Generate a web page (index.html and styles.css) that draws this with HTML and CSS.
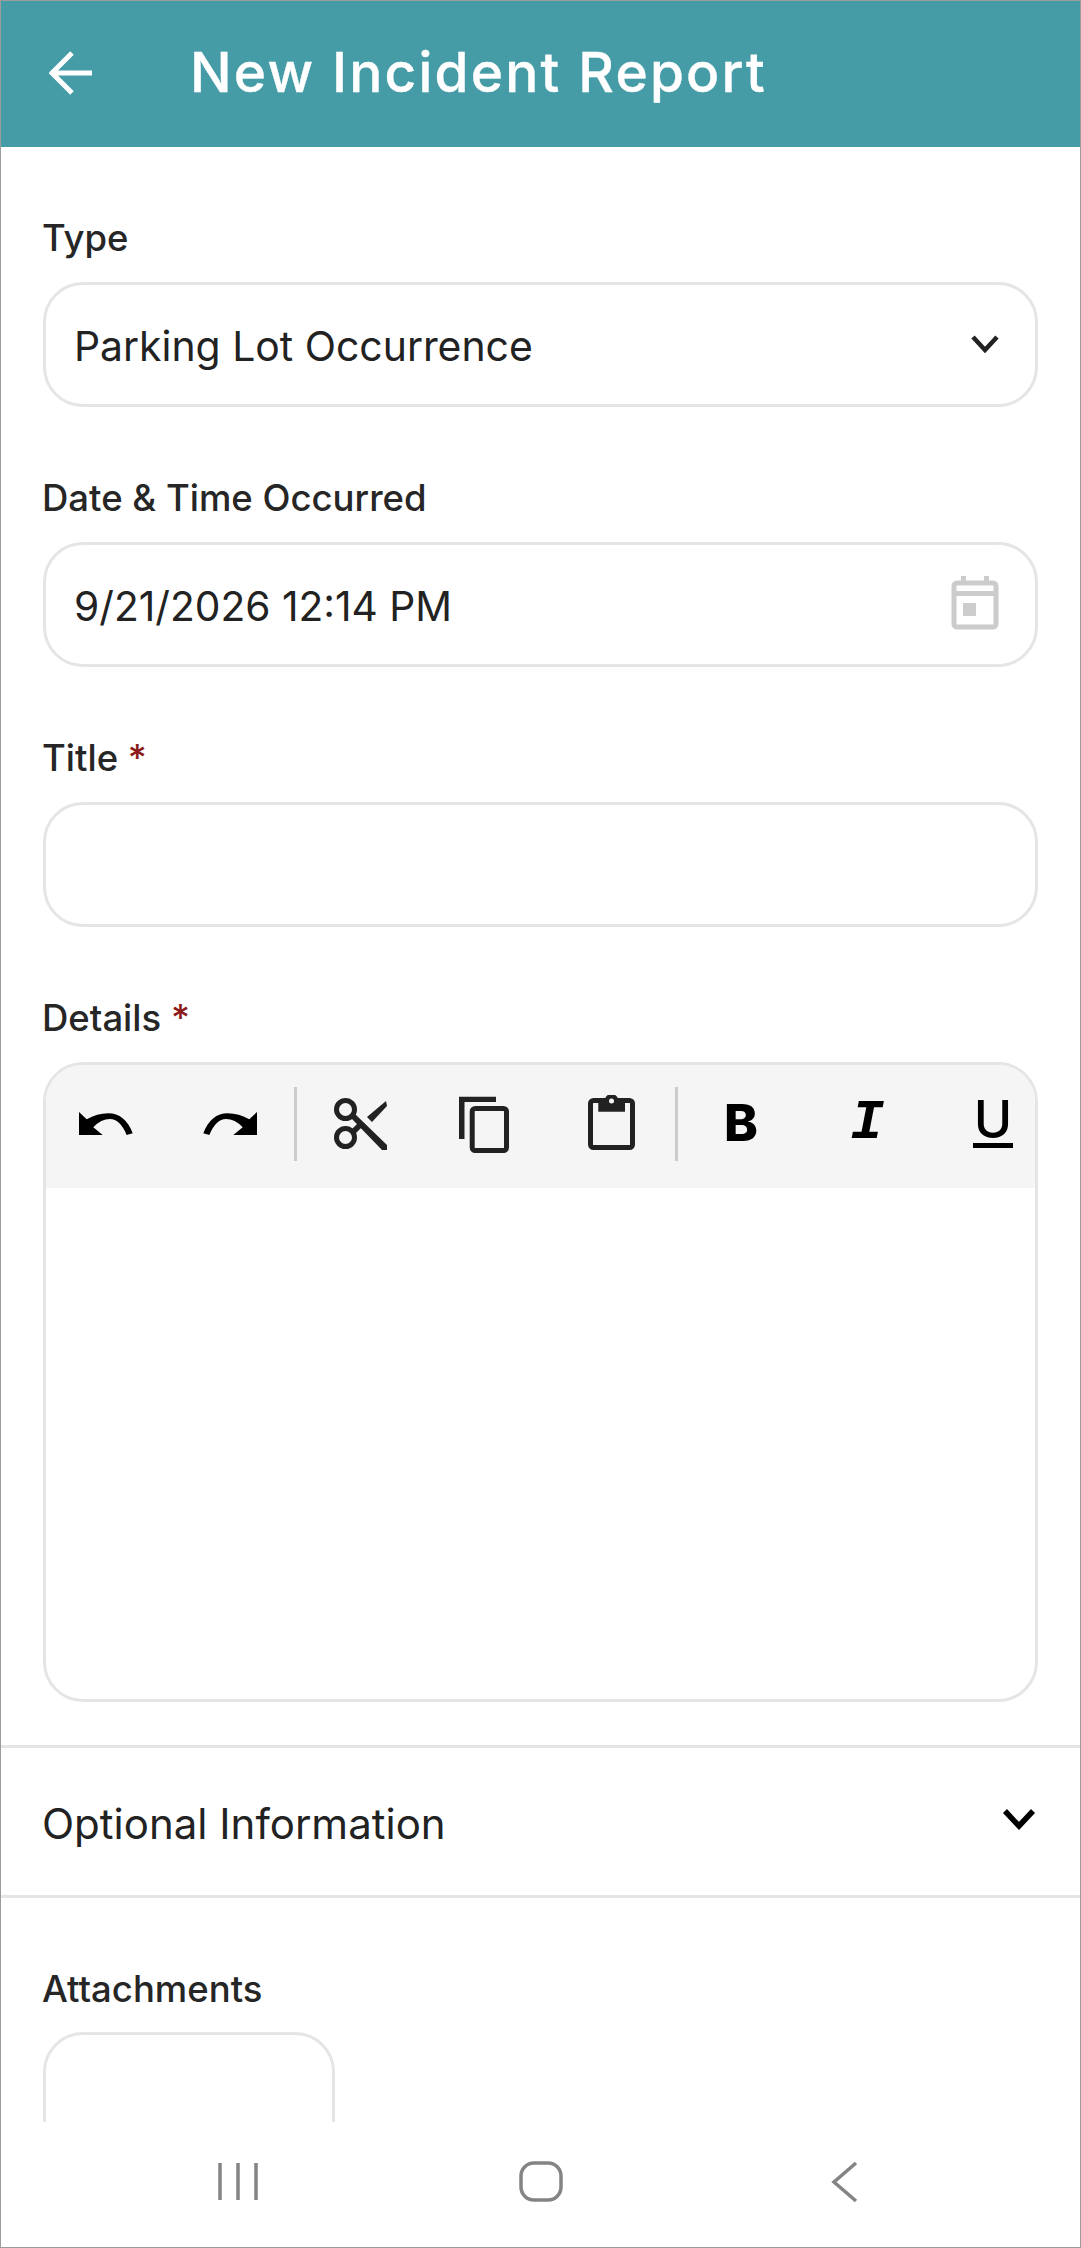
FILE: index.html
```html
<!DOCTYPE html>
<html lang="en">
<head>
<meta charset="utf-8">
<title>New Incident Report</title>
<link rel="stylesheet" href="styles.css">
</head>
<body>
<div class="app">
  <header class="topbar">
    <svg class="back" width="44" height="46" viewBox="0 0 44 46"><path d="M43 23H4M23 3 3 23l20 20"/></svg>
    <h1 class="title">New Incident Report</h1>
  </header>
  <main class="content">
    <section class="pad">
      <div class="label">Type</div>
      <div class="field">
        <span class="value">Parking Lot Occurrence</span>
        <svg class="chev" width="32" height="20" viewBox="0 0 32 20"><path d="M4 4l12 13L28 4"/></svg>
      </div>
      <div class="label">Date &amp; Time Occurred</div>
      <div class="field">
        <span class="value date">9/21/2026 12:14 PM</span>
        <svg class="cal" width="48" height="54" viewBox="0 0 48 54"><path class="cal-fill" d="M10 0h5v8h-5zM33 0h5v8h-5zM12 27h13v13H12z"/><rect class="cal-line" x="3" y="7" width="42" height="44" rx="3"/><path class="cal-fill" d="M3 15h42v5H3z"/></svg>
      </div>
      <div class="label">Title <span class="req">*</span></div>
      <div class="field"></div>
      <div class="label">Details <span class="req">*</span></div>
      <div class="editor">
        <div class="toolbar">
          <button class="tool"><svg class="ico" width="60" height="60" viewBox="0 0 60 60"><path class="solid" d="M4 17V40H27.7L18.3 32.3Q26 24 35 24Q45 24 51.7 40L57.7 38.3Q50 18.3 33.3 18.3Q22 18.3 11.7 24.3Z"/></svg></button>
          <button class="tool"><svg class="ico flip" width="60" height="60" viewBox="0 0 60 60"><path class="solid" d="M4 17V40H27.7L18.3 32.3Q26 24 35 24Q45 24 51.7 40L57.7 38.3Q50 18.3 33.3 18.3Q22 18.3 11.7 24.3Z"/></svg></button>
          <span class="sep"></span>
          <button class="tool"><svg class="ico" width="60" height="60" viewBox="0 0 60 60"><circle class="ln" cx="15.500" cy="14.500" r="9"/><circle class="ln" cx="15.500" cy="42.500" r="9"/><path class="dark" d="M21 23 25 19 57 50 57 55 52 55ZM21 35 27 29 31 33 25 39ZM37 22 56 6 57 11 42 27Z"/></svg></button>
          <button class="tool"><svg class="ico" width="60" height="60" viewBox="0 0 60 60"><path class="dark" d="M3 1.700H40V7H8.500V44H3Z"/><rect class="ln" x="16.200" y="13.500" width="34.300" height="42" rx="3"/></svg></button>
          <button class="tool"><svg class="ico" width="60" height="60" viewBox="0 0 60 60"><rect class="ln" x="8.500" y="5.500" width="42" height="47" rx="3"/><path class="dark" d="M16.300 3H43V16.700H16.300Z"/><circle class="dark" cx="29.500" cy="6" r="7"/><circle class="hole" cx="29.500" cy="6" r="2.500"/></svg></button>
          <span class="sep"></span>
          <button class="tool glyph-b">B</button>
          <button class="tool glyph-i">I</button>
          <button class="tool glyph-u"><span class="u">U</span></button>
        </div>
        <div class="editor-body"></div>
      </div>
    </section>
    <section class="accordion">
      <span class="acc-title">Optional Information</span>
      <svg class="chev-lg" width="36" height="24" viewBox="0 0 36 24"><path d="M4 5l14 15L32 5"/></svg>
    </section>
    <section class="pad">
      <div class="label attach-label">Attachments</div>
      <div class="attach"></div>
    </section>
  </main>
  <nav class="navbar">
    <span class="nav-item"><svg class="nav-ico" width="42" height="42" viewBox="0 0 42 42"><path d="M3 2v37M21 2v37M39 2v37"/></svg></span>
    <span class="nav-item"><svg class="nav-ico" width="46" height="42" viewBox="0 0 46 42"><rect x="3" y="2" width="40" height="37" rx="13"/></svg></span>
    <span class="nav-item"><svg class="nav-ico" width="30" height="42" viewBox="0 0 30 42"><path d="M27 2 5 21l22 19"/></svg></span>
  </nav>
</div>
</body>
</html>
```
FILE: styles.css
```css
* { box-sizing: border-box; }
html, body { margin: 0; padding: 0; background: #fff; }
body { font-family: "Inter", "Liberation Sans", sans-serif; color: #222; }
.app {
  width: 1081px; height: 2248px; display: flex; flex-direction: column;
  overflow: hidden; border: 1px solid #9c9c9c; background: #fff;
}
.topbar {
  height: 146px; flex: none; background: #459ca6; display: flex; align-items: center;
  padding-left: 49px; margin: 0 -1px;
}
.back { fill: none; stroke: #fff; stroke-width: 5; margin-top: -2px; }
.title { margin: -4px 0 0 97px; font-size: 55px; font-weight: 500; color: #fff; letter-spacing: 2.200px; line-height: 60px; -webkit-text-stroke: 0.4px #fff; }
.content { flex: 1; min-height: 0; overflow: hidden; display: flex; flex-direction: column; }
.pad { padding: 67px 42px 0; }
.label { font-size: 36.500px; font-weight: 500; line-height: 48px; margin: 0 0 20px -1px; color: #262626; }
.req { color: #8c1c1c; }
.field {
  height: 125px; border: 3px solid #e5e5e5; border-radius: 40px; margin-bottom: 67px;
  display: flex; align-items: center; justify-content: space-between; padding: 0 28px 0 28px;
}
.value { font-size: 40.900px; line-height: 50px; color: #222; margin-top: 2px; }
.date { margin-top: 4px; font-size: 40.700px; }
.chev { fill: none; stroke: #222; stroke-width: 4.500; margin: -4px 6px 0 0; }
.cal { margin-right: 8px; margin-top: -4px; }
.cal-fill { fill: #ccc; }
.cal-line { fill: none; stroke: #ccc; stroke-width: 5; }
.editor { height: 640px; border: 3px solid #e5e5e5; border-radius: 40px; overflow: hidden; }
.toolbar { height: 123px; background: #f5f5f5; display: flex; align-items: center; padding-bottom: 4px; }
.tool {
  flex: none; width: 126px; height: 119px; padding: 0; border: 0; background: none;
  display: flex; align-items: center; justify-content: center; color: #000;
}
.tool:first-child { margin-left: -4px; }
.sep { flex: none; width: 3px; height: 74px; background: #ccc; margin-bottom: 1px; }
.flip { transform: scaleX(-1); }
.solid { fill: #000; }
.dark { fill: #222; }
.ln { fill: none; stroke: #222; stroke-width: 5; }
.hole { fill: #f5f5f5; }
.glyph-b { font-family: "Inter", sans-serif; font-weight: 800; font-size: 51px; line-height: 60px; padding-bottom: 4px; }
.glyph-i { font-family: "Liberation Mono", monospace; font-weight: 700; font-style: italic; font-size: 56px; line-height: 60px; padding-bottom: 4px; }
.glyph-u { font-family: "Inter", sans-serif; font-weight: 500; font-size: 52px; }
.u { display: block; line-height: 44px; border-bottom: 5px solid #000; padding: 0 1px 1px; margin-bottom: 4px; }
.accordion {
  margin: 43px -1px 0; height: 153px; flex: none; border-top: 3px solid #e5e5e5; border-bottom: 3px solid #e5e5e5;
  display: flex; align-items: center; justify-content: space-between; padding: 0 44px 0 42px;
}
.acc-title { font-size: 42px; line-height: 50px; color: #222; margin-top: 4px; }
.chev-lg { fill: none; stroke: #000; stroke-width: 5.500; margin-top: -8px; }
.attach-label { margin-bottom: 19px; }
.attach { width: 292px; height: 200px; border: 3px solid #e5e5e5; border-radius: 40px; }
.navbar {
  height: 125px; flex: none; background: #fff; display: grid; grid-template-columns: repeat(3, 303px);
  justify-content: center; padding-top: 39px; align-items: start;
}
.nav-item { display: flex; justify-content: center; }
.nav-ico { fill: none; stroke: #848484; stroke-width: 3.500; }
```
